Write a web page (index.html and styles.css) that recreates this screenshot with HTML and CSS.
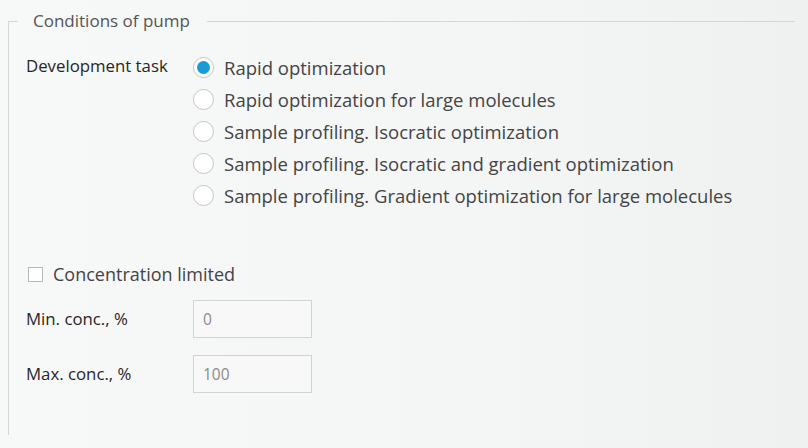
FILE: index.html
```html
<!DOCTYPE html>
<html>
<head>
<meta charset="utf-8">
<link rel="stylesheet" href="styles.css">
</head>
<body>
<fieldset class="group">
  <legend class="group-title">Conditions of pump</legend>
  <div class="task-row">
    <div class="field-label task-label">Development task</div>
    <div class="radio-list">
      <label class="radio"><span class="radio-dot checked"></span><span class="radio-text">Rapid optimization</span></label>
      <label class="radio"><span class="radio-dot"></span><span class="radio-text">Rapid optimization for large molecules</span></label>
      <label class="radio"><span class="radio-dot"></span><span class="radio-text">Sample profiling. Isocratic optimization</span></label>
      <label class="radio"><span class="radio-dot"></span><span class="radio-text">Sample profiling. Isocratic and gradient optimization</span></label>
      <label class="radio"><span class="radio-dot"></span><span class="radio-text">Sample profiling. Gradient optimization for large molecules</span></label>
    </div>
  </div>
  <label class="check"><span class="check-box"></span><span class="check-text">Concentration limited</span></label>
  <div class="conc-row">
    <div class="field-label">Min. conc., %</div>
    <div class="input">0</div>
  </div>
  <div class="conc-row">
    <div class="field-label">Max. conc., %</div>
    <div class="input">100</div>
  </div>
</fieldset>
</body>
</html>
```
FILE: styles.css
```css
html, body {
  margin: 0;
  padding: 0;
}
body {
  width: 808px;
  height: 448px;
  overflow: hidden;
  background: linear-gradient(90deg, #f7f8f8 0%, #f4f5f5 60%, #eff0f0 100%);
  font-family: "Open Sans", "Noto Sans", sans-serif;
  color: #333;
}
.group {
  margin: 12px 13px 0 8px;
  padding: 0 0 0 17px;
  height: 423px;
  box-sizing: border-box;
  border: none;
  border-top: 1px solid #d4d6d6;
  border-left: 1px solid #d4d6d6;
  min-width: 0;
}
.group-title {
  margin-left: -8px;
  padding: 0 17px 0 15px;
  font-size: 17px;
  color: #555;
  line-height: 18px;
}
.task-row {
  display: flex;
  margin-top: 27px;
}
.field-label {
  font-size: 16.8px;
  color: #262626;
  line-height: 20px;
}
.task-label {
  width: 167px;
  line-height: 18px;
}
.radio-list {
  display: flex;
  flex-direction: column;
  gap: 11px;
}
.radio {
  display: flex;
  align-items: center;
  gap: 10px;
  height: 21px;
}
.radio-dot {
  width: 21px;
  height: 21px;
  box-sizing: border-box;
  border: 1px solid #c4c6c6;
  border-radius: 50%;
  background: #fff;
  display: flex;
  align-items: center;
  justify-content: center;
}
.radio-dot.checked::after {
  content: "";
  width: 13px;
  height: 13px;
  border-radius: 50%;
  background: #1a9ad6;
}
.radio-text {
  font-size: 18.5px;
  color: #444;
  line-height: 21px;
}
.check {
  display: flex;
  align-items: center;
  gap: 10px;
  margin-top: 57px;
  margin-left: 2px;
}
.check-box {
  width: 15px;
  height: 15px;
  box-sizing: border-box;
  border: 1px solid #b8baba;
  background: #fff;
}
.check-text {
  font-size: 18px;
  color: #444;
  line-height: 22px;
}
.conc-row {
  display: flex;
  align-items: center;
  margin-top: 15px;
}
.conc-row + .conc-row {
  margin-top: 17px;
}
.conc-row .field-label {
  width: 167px;
}
.input {
  width: 119px;
  height: 38px;
  box-sizing: border-box;
  border: 1px solid #d2d4d4;
  background: #f8f8f8;
  padding: 0 9px;
  font-size: 15.5px;
  line-height: 36px;
  color: #8a8a8a;
}
```
